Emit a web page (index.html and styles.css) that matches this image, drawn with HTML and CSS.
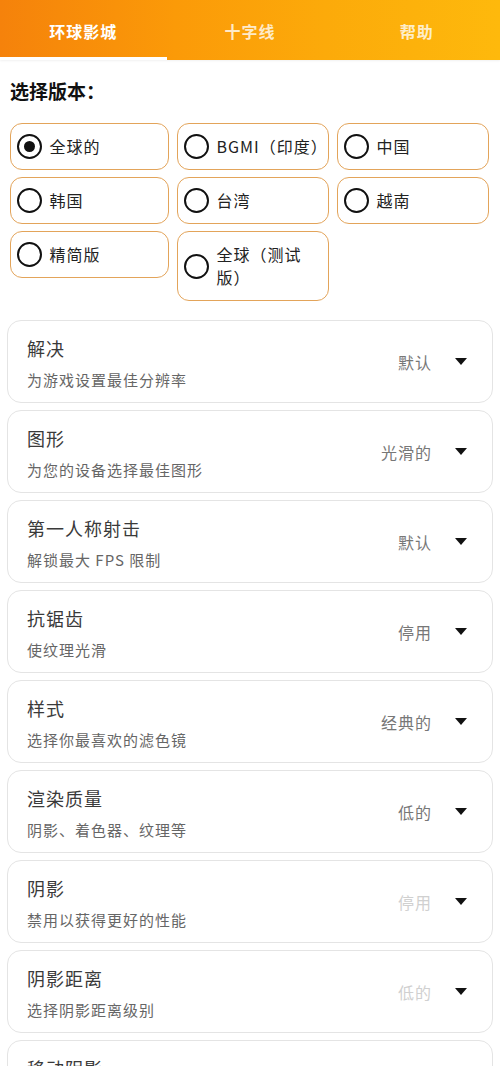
FILE: index.html
```html
<!DOCTYPE html>
<html lang="zh">
<head>
<meta charset="utf-8">
<link rel="stylesheet" href="styles.css">
</head>
<body>
<header class="tabs">
  <div class="tab active">环球影城</div>
  <div class="tab">十字线</div>
  <div class="tab">帮助</div>
</header>
<main class="page">
  <h2 class="heading">选择版本：</h2>
  <div class="versions">
    <div class="opt"><span class="radio checked"></span><span class="label">全球的</span></div>
    <div class="opt"><span class="radio"></span><span class="label">BGMI（印度）</span></div>
    <div class="opt"><span class="radio"></span><span class="label">中国</span></div>
    <div class="opt"><span class="radio"></span><span class="label">韩国</span></div>
    <div class="opt"><span class="radio"></span><span class="label">台湾</span></div>
    <div class="opt"><span class="radio"></span><span class="label">越南</span></div>
    <div class="opt"><span class="radio"></span><span class="label">精简版</span></div>
    <div class="opt tall"><span class="radio"></span><span class="label">全球（测试版）</span></div>
  </div>
  <div class="cards">
    <div class="card"><div class="info"><div class="title">解决</div><div class="sub">为游戏设置最佳分辨率</div></div><div class="value">默认</div><span class="caret"></span></div>
    <div class="card"><div class="info"><div class="title">图形</div><div class="sub">为您的设备选择最佳图形</div></div><div class="value">光滑的</div><span class="caret"></span></div>
    <div class="card"><div class="info"><div class="title">第一人称射击</div><div class="sub">解锁最大 FPS 限制</div></div><div class="value">默认</div><span class="caret"></span></div>
    <div class="card"><div class="info"><div class="title">抗锯齿</div><div class="sub">使纹理光滑</div></div><div class="value">停用</div><span class="caret"></span></div>
    <div class="card"><div class="info"><div class="title">样式</div><div class="sub">选择你最喜欢的滤色镜</div></div><div class="value">经典的</div><span class="caret"></span></div>
    <div class="card"><div class="info"><div class="title">渲染质量</div><div class="sub">阴影、着色器、纹理等</div></div><div class="value">低的</div><span class="caret"></span></div>
    <div class="card"><div class="info"><div class="title">阴影</div><div class="sub">禁用以获得更好的性能</div></div><div class="value disabled">停用</div><span class="caret"></span></div>
    <div class="card"><div class="info"><div class="title">阴影距离</div><div class="sub">选择阴影距离级别</div></div><div class="value disabled">低的</div><span class="caret"></span></div>
    <div class="card"><div class="info"><div class="title">移动阴影</div><div class="sub">启用移动物体的阴影</div></div><div class="value disabled">停用</div><span class="caret"></span></div>
  </div>
</main>
</body>
</html>
```
FILE: styles.css
```css
html, body {
  margin: 0;
  padding: 0;
  background: #ffffff;
  font-family: "Noto Sans CJK SC", "Noto Sans", sans-serif;
  color: #222;
}
.tabs {
  display: flex;
  height: 60px;
  background: linear-gradient(90deg, #f5820b 0%, #fb9a08 35%, #fcaa0a 65%, #feb90c 100%);
  box-shadow: 0 1px 2px rgba(0,0,0,0.06);
}
.tab {
  flex: 1;
  display: flex;
  align-items: center;
  justify-content: center;
  font-size: 16px;
  letter-spacing: 1px;
  font-weight: 700;
  color: rgba(255,255,255,0.78);
  border-bottom: 3px solid transparent;
  padding-top: 4px;
}
.tab.active {
  color: #ffffff;
  border-bottom-color: #ffffff;
}
.page {
  padding: 18px 0 0;
}
.heading {
  margin: 0 0 19px 10px;
  font-size: 19px;
  line-height: 26px;
  font-weight: 700;
  color: #111;
}
.versions {
  display: grid;
  grid-template-columns: 159px 152px 152px;
  column-gap: 8px;
  row-gap: 7px;
  align-items: start;
  margin-left: 10px;
}
.opt {
  display: flex;
  align-items: center;
  gap: 8px;
  min-height: 47px;
  box-sizing: border-box;
  border: 1.5px solid #e3a45a;
  border-radius: 12px;
  padding: 0 8px 0 5.5px;
}
.opt.tall {
  min-height: 70px;
}
.radio {
  flex: none;
  width: 25px;
  height: 25px;
  box-sizing: border-box;
  border: 2.8px solid #111;
  border-radius: 50%;
  display: flex;
  align-items: center;
  justify-content: center;
}
.radio.checked::after {
  content: "";
  width: 11px;
  height: 11px;
  border-radius: 50%;
  background: #111;
}
.label {
  font-size: 16px;
  letter-spacing: 1px;
  line-height: 23px;
  color: #222;
}
.cards {
  display: flex;
  flex-direction: column;
  gap: 7px;
  margin: 19px 7px 0;
}
.card {
  display: flex;
  align-items: center;
  height: 83px;
  box-sizing: border-box;
  border: 1.5px solid #e4e4e4;
  border-radius: 14px;
  padding: 0 25px 0 19px;
}
.info {
  flex: 1;
  padding-top: 3px;
}
.title {
  font-size: 18px;
  letter-spacing: 1px;
  line-height: 26px;
  color: #3a3a3a;
  margin-bottom: 8px;
}
.sub {
  font-size: 15px;
  letter-spacing: 1px;
  line-height: 22px;
  color: #666;
}
.value {
  font-size: 16px;
  letter-spacing: 1px;
  color: #777;
  margin-right: 23px;
}
.value.disabled {
  color: #d0d0d0;
}
.caret {
  width: 0;
  height: 0;
  border-left: 6px solid transparent;
  border-right: 6px solid transparent;
  border-top: 7px solid #111;
}
```
